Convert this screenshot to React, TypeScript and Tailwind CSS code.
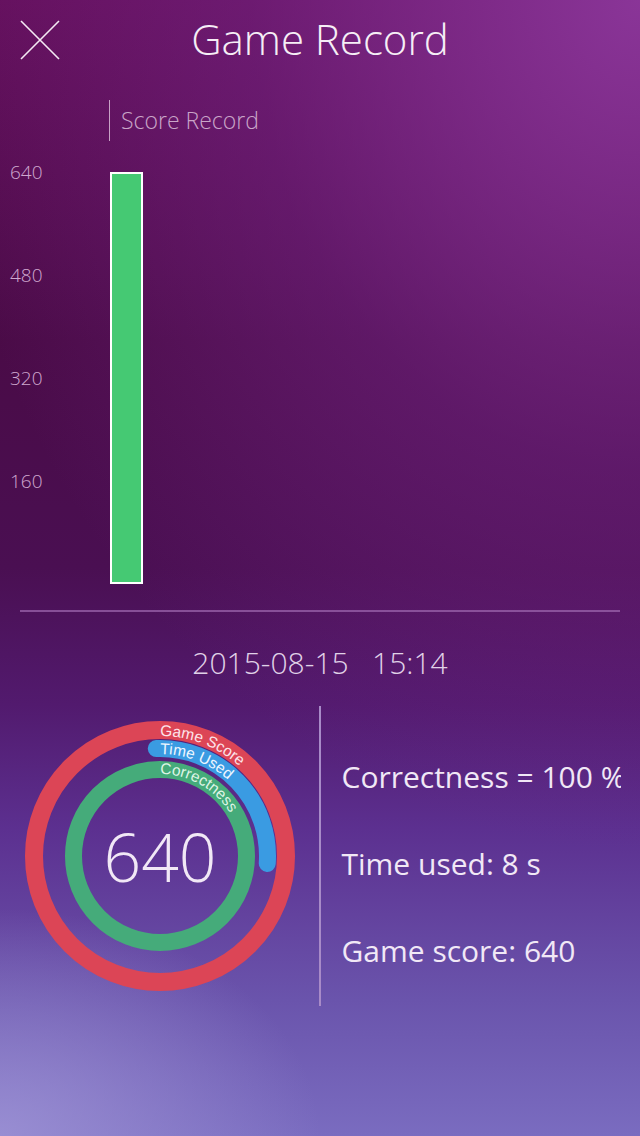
import React from 'react';

const axis = ['640', '480', '320', '160'];

const stats = ['Correctness = 100 %', 'Time used: 8 s', 'Game score: 640'];

// circle path starting at 12 o'clock, clockwise, so text runs from the top
const ringPath = (r: number) =>
  `M 160 ${150 - r} A ${r} ${r} 0 1 1 160 ${150 + r} A ${r} ${r} 0 1 1 160 ${150 - r}`;

function Rings() {
  return (
    <svg width="319" height="300" viewBox="0 0 319 300">
      <defs>
        <path id="p-red" d={ringPath(120)} />
        <path id="p-blue" d={ringPath(102)} />
        <path id="p-green" d={ringPath(82)} />
      </defs>
      <circle cx="160" cy="150" r="126" fill="none" stroke="#dc4556" strokeWidth="18" />
      <path
        d="M 156.25 42.57 A 107.5 107.5 0 0 1 267.24 157.5"
        fill="none"
        stroke="#3a9be2"
        strokeWidth="17"
        strokeLinecap="round"
      />
      <circle cx="160" cy="150" r="86.5" fill="none" stroke="#45ab7a" strokeWidth="17" />
      <g fontFamily="'Liberation Sans', Arial, sans-serif" fontSize="15.5">
        <text fill="#fde3ea">
          <textPath href="#p-red">Game Score</textPath>
        </text>
        <text fill="#eef6ff">
          <textPath href="#p-blue">Time Used</textPath>
        </text>
        <text fill="#dff5e6">
          <textPath href="#p-green">Correctness</textPath>
        </text>
      </g>
      <text
        x="160"
        y="150"
        textAnchor="middle"
        dominantBaseline="central"
        fill="#f1e8f6"
        fontSize="66"
        fontWeight="300"
        fontFamily="'Open Sans', sans-serif"
      >
        640
      </text>
    </svg>
  );
}

export default function App() {
  return (
    <div
      className="w-[640px] h-[1136px] overflow-hidden text-white bg-[radial-gradient(ellipse_110%_75%_at_100%_0%,rgba(140,55,155,0.95),rgba(120,40,140,0.45)_55%,transparent),radial-gradient(ellipse_50%_20%_at_0%_100%,rgba(160,150,215,0.8),transparent),linear-gradient(180deg,#640f5b_0%,#4a0b47_30%,#4a0f52_50%,#521a6e_62%,#5c3090_73%,#6a54ac_88%,#7a6cc0_100%)]"
      style={{ fontFamily: "'Open Sans', sans-serif" }}
    >
      {/* Header */}
      <div className="h-[80px] grid grid-cols-[80px_1fr_80px] items-center">
        <div className="pl-[20px]">
          <svg width="40" height="40" viewBox="0 0 40 40">
            <path d="M1 1 L39 39 M39 1 L1 39" stroke="#f4eaf4" strokeWidth="1.6" />
          </svg>
        </div>
        <h1 className="text-center text-[42px] font-light text-[#f6eef6] leading-none -mt-[2px]">Game Record</h1>
        <div />
      </div>

      {/* Score record label */}
      <div className="mt-[20px] ml-[109px] h-[41px] border-l-[1.5px] border-[#c8a2c6] pl-[11px] flex items-center">
        <span className="text-[23px] font-light text-[#c9a5c8]">Score Record</span>
      </div>

      {/* Bar chart */}
      <div className="mt-[31px] flex items-start">
        <div className="w-[110px] pl-[10px] -mt-[10px] flex flex-col">
          {axis.map((v) => (
            <div key={v} className="h-[103px] text-[19px] leading-[20px] font-light text-[#cfa8cf]">
              {v}
            </div>
          ))}
        </div>
        <div className="w-[33px] h-[412px] border-2 border-white bg-[#45c973]" />
      </div>

      <div className="mt-[26px] mx-[20px] h-[2px] bg-[#a06ab0]/70" />

      <div className="mt-[33px] h-[36px] text-center text-[30px] leading-[36px] font-light text-[#e0d2e8]">
        2015-08-15&nbsp;&nbsp;&nbsp;15:14
      </div>

      {/* Result */}
      <div className="mt-[25px] flex h-[300px]">
        <Rings />
        <div className="w-[1.5px] h-[300px] bg-[#a88bc8]" />
        <div className="w-[300px] overflow-hidden pl-[21px] pt-[51px] flex flex-col gap-[47px] whitespace-nowrap">
          {stats.map((s) => (
            <div key={s} className="h-[40px] leading-[40px] text-[30px] text-[#f1e8f6]">
              {s}
            </div>
          ))}
        </div>
      </div>
    </div>
  );
}
